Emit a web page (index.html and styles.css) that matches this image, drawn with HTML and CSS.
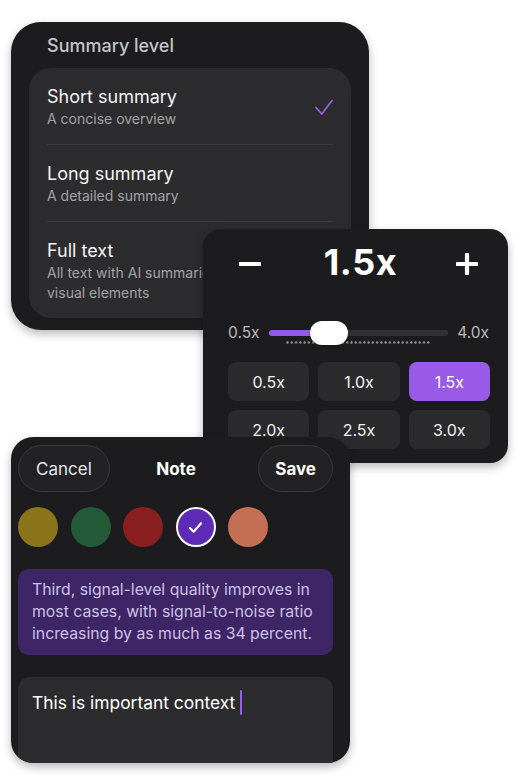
FILE: index.html
```html
<!DOCTYPE html>
<html lang="en">
<head>
<meta charset="utf-8">
<title>Reader settings</title>
<link rel="stylesheet" href="styles.css">
</head>
<body>
<div class="canvas">

  <section class="card summary">
    <h2 class="summary-title">Summary level</h2>
    <ul class="options">
      <li class="option">
        <div class="opt-text">
          <div class="opt-name">Short summary</div>
          <div class="opt-desc">A concise overview</div>
        </div>
        <svg class="opt-check" viewBox="0 0 18 17" width="18" height="17"><path d="M1 8.5 L6.8 15 L17 1.5" fill="none" stroke="#9b5cf0" stroke-width="1.7" stroke-linecap="round" stroke-linejoin="round"/></svg>
      </li>
      <li class="option">
        <div class="opt-text">
          <div class="opt-name">Long summary</div>
          <div class="opt-desc">A detailed summary</div>
        </div>
        <span class="opt-check"></span>
      </li>
      <li class="option">
        <div class="opt-text">
          <div class="opt-name">Full text</div>
          <div class="opt-desc">All text with AI summaries and <span class="nowrap">visual elements</span></div>
        </div>
        <span class="opt-check"></span>
      </li>
    </ul>
  </section>

  <section class="card speed">
    <div class="speed-head">
      <button class="step-btn" aria-label="Decrease">
        <svg viewBox="0 0 22 22" width="22" height="22"><path d="M1.5 11 H20.5" stroke="#fff" stroke-width="4.2" stroke-linecap="round"/></svg>
      </button>
      <div class="speed-value">1.5x</div>
      <button class="step-btn" aria-label="Increase">
        <svg viewBox="0 0 22 22" width="22" height="22"><path d="M1.5 11 H20.5 M11 1.5 V20.5" stroke="#fff" stroke-width="4.2" stroke-linecap="round"/></svg>
      </button>
    </div>
    <div class="slider-row">
      <span class="slider-label">0.5x</span>
      <div class="slider">
        <div class="track"><div class="track-fill"></div></div>
        <div class="ticks"></div>
        <div class="thumb"></div>
      </div>
      <span class="slider-label">4.0x</span>
    </div>
    <div class="presets">
      <button class="preset">0.5x</button>
      <button class="preset">1.0x</button>
      <button class="preset is-active">1.5x</button>
      <button class="preset">2.0x</button>
      <button class="preset">2.5x</button>
      <button class="preset">3.0x</button>
    </div>
  </section>

  <section class="card note">
    <div class="note-head">
      <button class="pill">Cancel</button>
      <div class="note-title">Note</div>
      <button class="pill pill-strong">Save</button>
    </div>
    <div class="swatches">
      <span class="swatch swatch-olive"></span>
      <span class="swatch swatch-green"></span>
      <span class="swatch swatch-red"></span>
      <span class="swatch swatch-purple is-selected">
        <svg viewBox="0 0 16 14" width="15" height="13"><path d="M2 7.5 L6 11.5 L14 2.5" fill="none" stroke="#fff" stroke-width="2.4" stroke-linecap="round" stroke-linejoin="round"/></svg>
      </span>
      <span class="swatch swatch-salmon"></span>
    </div>
    <blockquote class="quote">Third, signal-level quality improves in most cases, with signal-to-noise ratio increasing by as much as 34 percent.</blockquote>
    <div class="note-input">This is important context<span class="caret"></span></div>
  </section>

</div>
</body>
</html>
```

FILE: styles.css
```css
* { box-sizing: border-box; }

html, body {
  margin: 0;
  padding: 0;
  background: #ffffff;
}

body {
  font-family: "Inter", "Noto Sans", "Liberation Sans", sans-serif;
  color: #f2f2f2;
}

.canvas {
  position: relative;
  width: 518px;
  height: 777px;
  overflow: hidden;
}

button {
  font-family: inherit;
  border: none;
  margin: 0;
  cursor: pointer;
}

.nowrap { white-space: nowrap; }

.card {
  position: absolute;
  background: #1c1c1e;
  box-shadow: 0 4px 10px rgba(0, 0, 0, 0.28);
  overflow: hidden;
}

/* ---------- Summary level ---------- */
.summary {
  left: 11px;
  top: 22px;
  width: 358px;
  height: 308px;
  border-radius: 30px;
  padding: 13px 18px 14px 18px;
  display: flex;
  flex-direction: column;
  z-index: 1;
}

.summary-title {
  margin: 0 0 11px 18px;
  font-size: 18px;
  line-height: 22px;
  font-weight: 500;
  color: #c5c5c8;
}

.options {
  list-style: none;
  margin: 0;
  padding: 0 18px;
  background: #2c2c2e;
  border-radius: 22px;
  flex: 1;
}

.option {
  display: flex;
  align-items: center;
  gap: 14px;
  padding: 18px 0 15px;
  border-bottom: 1px solid #3b3b3d;
}

.option:last-child {
  border-bottom: none;
}

.opt-text {
  flex: 1;
  min-width: 0;
}

.opt-name {
  font-size: 18px;
  line-height: 22px;
  color: #f4f4f4;
}

.opt-desc {
  margin-top: 1px;
  font-size: 14px;
  line-height: 20px;
  color: #a3a3a8;
}

.opt-check {
  flex: 0 0 18px;
  width: 18px;
  display: block;
}

/* ---------- Speed ---------- */
.speed {
  left: 203px;
  top: 229px;
  width: 305px;
  height: 234px;
  border-radius: 18px;
  padding: 13px 18px 14px 25px;
  z-index: 2;
}

.speed-head {
  display: flex;
  align-items: center;
  justify-content: space-between;
  padding-right: 1px;
}

.step-btn {
  width: 44px;
  height: 40px;
  background: transparent;
  display: flex;
  align-items: center;
  justify-content: center;
  padding: 4px 0 0;
}

.speed-value {
  font-size: 36px;
  line-height: 40px;
  font-weight: 700;
  color: #ffffff;
  letter-spacing: 0.6px;
  margin-left: 4px;
}

.slider-row {
  margin-top: 39px;
  display: flex;
  align-items: center;
  gap: 9px;
  height: 24px;
  padding-right: 1px;
}

.slider-label {
  font-size: 15.5px;
  line-height: 20px;
  color: #b9b9bd;
}

.slider {
  position: relative;
  flex: 1;
  height: 24px;
  display: flex;
  align-items: center;
}

.track {
  width: 100%;
  height: 6px;
  border-radius: 3px;
  background: #313133;
  overflow: hidden;
}

.track-fill {
  width: 30%;
  height: 100%;
  background: #9259ea;
}

.ticks {
  position: absolute;
  left: 17px;
  right: 17px;
  top: 20px;
  height: 3px;
  background-image: radial-gradient(circle, #858588 1.05px, transparent 1.45px);
  background-size: 4.27px 3px;
  background-position: -0.6px 0;
}

.thumb {
  position: absolute;
  left: 41px;
  top: 0;
  width: 38px;
  height: 24px;
  border-radius: 12px;
  background: #ffffff;
  box-shadow: 0 1px 3px rgba(0, 0, 0, 0.3);
}

.presets {
  margin-top: 17px;
  display: grid;
  grid-template-columns: repeat(3, 1fr);
  gap: 9px;
}

.preset {
  height: 39px;
  border-radius: 8px;
  background: #2b2b2d;
  color: #f2f2f2;
  font-size: 16px;
}

.preset.is-active {
  background: #9a5ae8;
  color: #ffffff;
}

/* ---------- Note ---------- */
.note {
  left: 11px;
  top: 437px;
  width: 339px;
  height: 326px;
  border-radius: 22px;
  padding: 8px 17px 0 7px;
  display: flex;
  flex-direction: column;
  z-index: 3;
}

.note-head {
  display: flex;
  align-items: center;
  justify-content: space-between;
  height: 47px;
}

.pill {
  height: 47px;
  border-radius: 24px;
  background: #222224;
  border: 1px solid #3a3a3d;
  color: #e8e8ea;
  font-size: 17px;
  padding: 0 17px;
}

.pill-strong {
  font-weight: 700;
  color: #ffffff;
  padding: 0 16px;
}

.note-title {
  font-size: 17px;
  font-weight: 700;
  color: #ffffff;
  margin-right: 16px;
}

.swatches {
  margin-top: 15px;
  display: flex;
  gap: 12.5px;
}

.swatch {
  width: 40px;
  height: 40px;
  border-radius: 50%;
  display: flex;
  align-items: center;
  justify-content: center;
}

.swatch-olive { background: #8b7419; }
.swatch-green { background: #245a37; }
.swatch-red { background: #8a1f21; }
.swatch-purple { background: #5e2bb7; }
.swatch-salmon { background: #c46f53; }

.swatch.is-selected {
  border: 2.5px solid #ffffff;
}

.quote {
  margin: 22px 0 0;
  padding: 10px 14px;
  background: #3d2566;
  border-radius: 10px;
  font-size: 15.8px;
  line-height: 22px;
  color: #cdc1e4;
}

.note-input {
  margin-top: 22px;
  flex: 1;
  background: #2c2c2e;
  border-radius: 12px 12px 0 0;
  padding: 13px 14px;
  font-size: 17.4px;
  line-height: 22px;
  color: #ffffff;
}

.caret {
  display: inline-block;
  width: 2px;
  height: 25px;
  margin-left: 5px;
  vertical-align: -6px;
  background: #9b5cf0;
  border-radius: 1px;
}
```
